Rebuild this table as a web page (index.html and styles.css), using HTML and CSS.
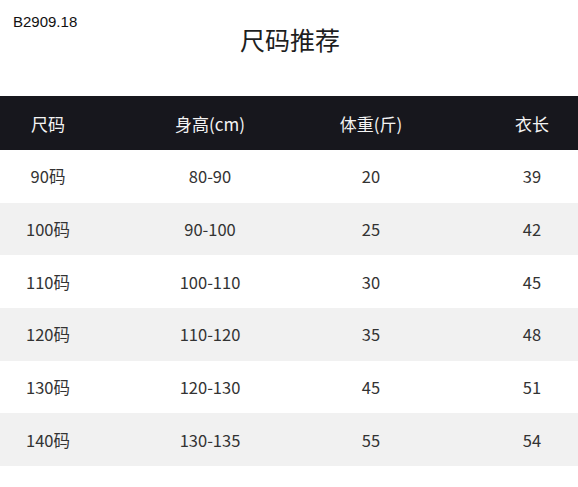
FILE: index.html
```html
<!DOCTYPE html>
<html lang="zh">
<head>
<meta charset="utf-8">
<link rel="stylesheet" href="styles.css">
</head>
<body>
<div class="page">
  <div class="top">
    <div class="code">B2909.18</div>
    <h1 class="title">尺码推荐</h1>
  </div>
  <div class="table">
    <div class="row head"><span>尺码</span><span>身高(cm)</span><span>体重(斤)</span><span>衣长</span></div>
    <div class="row"><span>90码</span><span>80-90</span><span>20</span><span>39</span></div>
    <div class="row alt"><span>100码</span><span>90-100</span><span>25</span><span>42</span></div>
    <div class="row"><span>110码</span><span>100-110</span><span>30</span><span>45</span></div>
    <div class="row alt"><span>120码</span><span>110-120</span><span>35</span><span>48</span></div>
    <div class="row"><span>130码</span><span>120-130</span><span>45</span><span>51</span></div>
    <div class="row alt"><span>140码</span><span>130-135</span><span>55</span><span>54</span></div>
  </div>
</div>
</body>
</html>
```
FILE: styles.css
```css
html, body {
  margin: 0;
  padding: 0;
  background: #ffffff;
}
.page {
  width: 578px;
  height: 487px;
  font-family: "Noto Sans CJK SC", "Noto Sans", sans-serif;
  color: #333333;
}
.top {
  height: 96px;
  display: grid;
}
.code {
  grid-area: 1 / 1;
  justify-self: start;
  align-self: start;
  padding: 13px 0 0 13px;
  font-family: "Liberation Sans", Arial, sans-serif;
  font-size: 15px;
  line-height: 18px;
  color: #111111;
}
.title {
  grid-area: 1 / 1;
  justify-self: center;
  align-self: start;
  margin: 0;
  padding: 23px 0 0 2px;
  font-size: 25px;
  line-height: 32px;
  font-weight: 400;
  color: #1e1e1e;
}
.table {
  display: flex;
  flex-direction: column;
}
.row {
  display: grid;
  grid-template-columns: 96px 228px 94px 160px;
  height: 52.7px;
  align-items: center;
  font-size: 16.5px;
  text-align: center;
}
.row > span:last-child {
  padding-left: 68px;
}
.row.head {
  height: 54px;
  background: #17171d;
  color: #f4f4f4;
  font-size: 17px;
}
.row.alt {
  background: #f1f1f1;
}
```
